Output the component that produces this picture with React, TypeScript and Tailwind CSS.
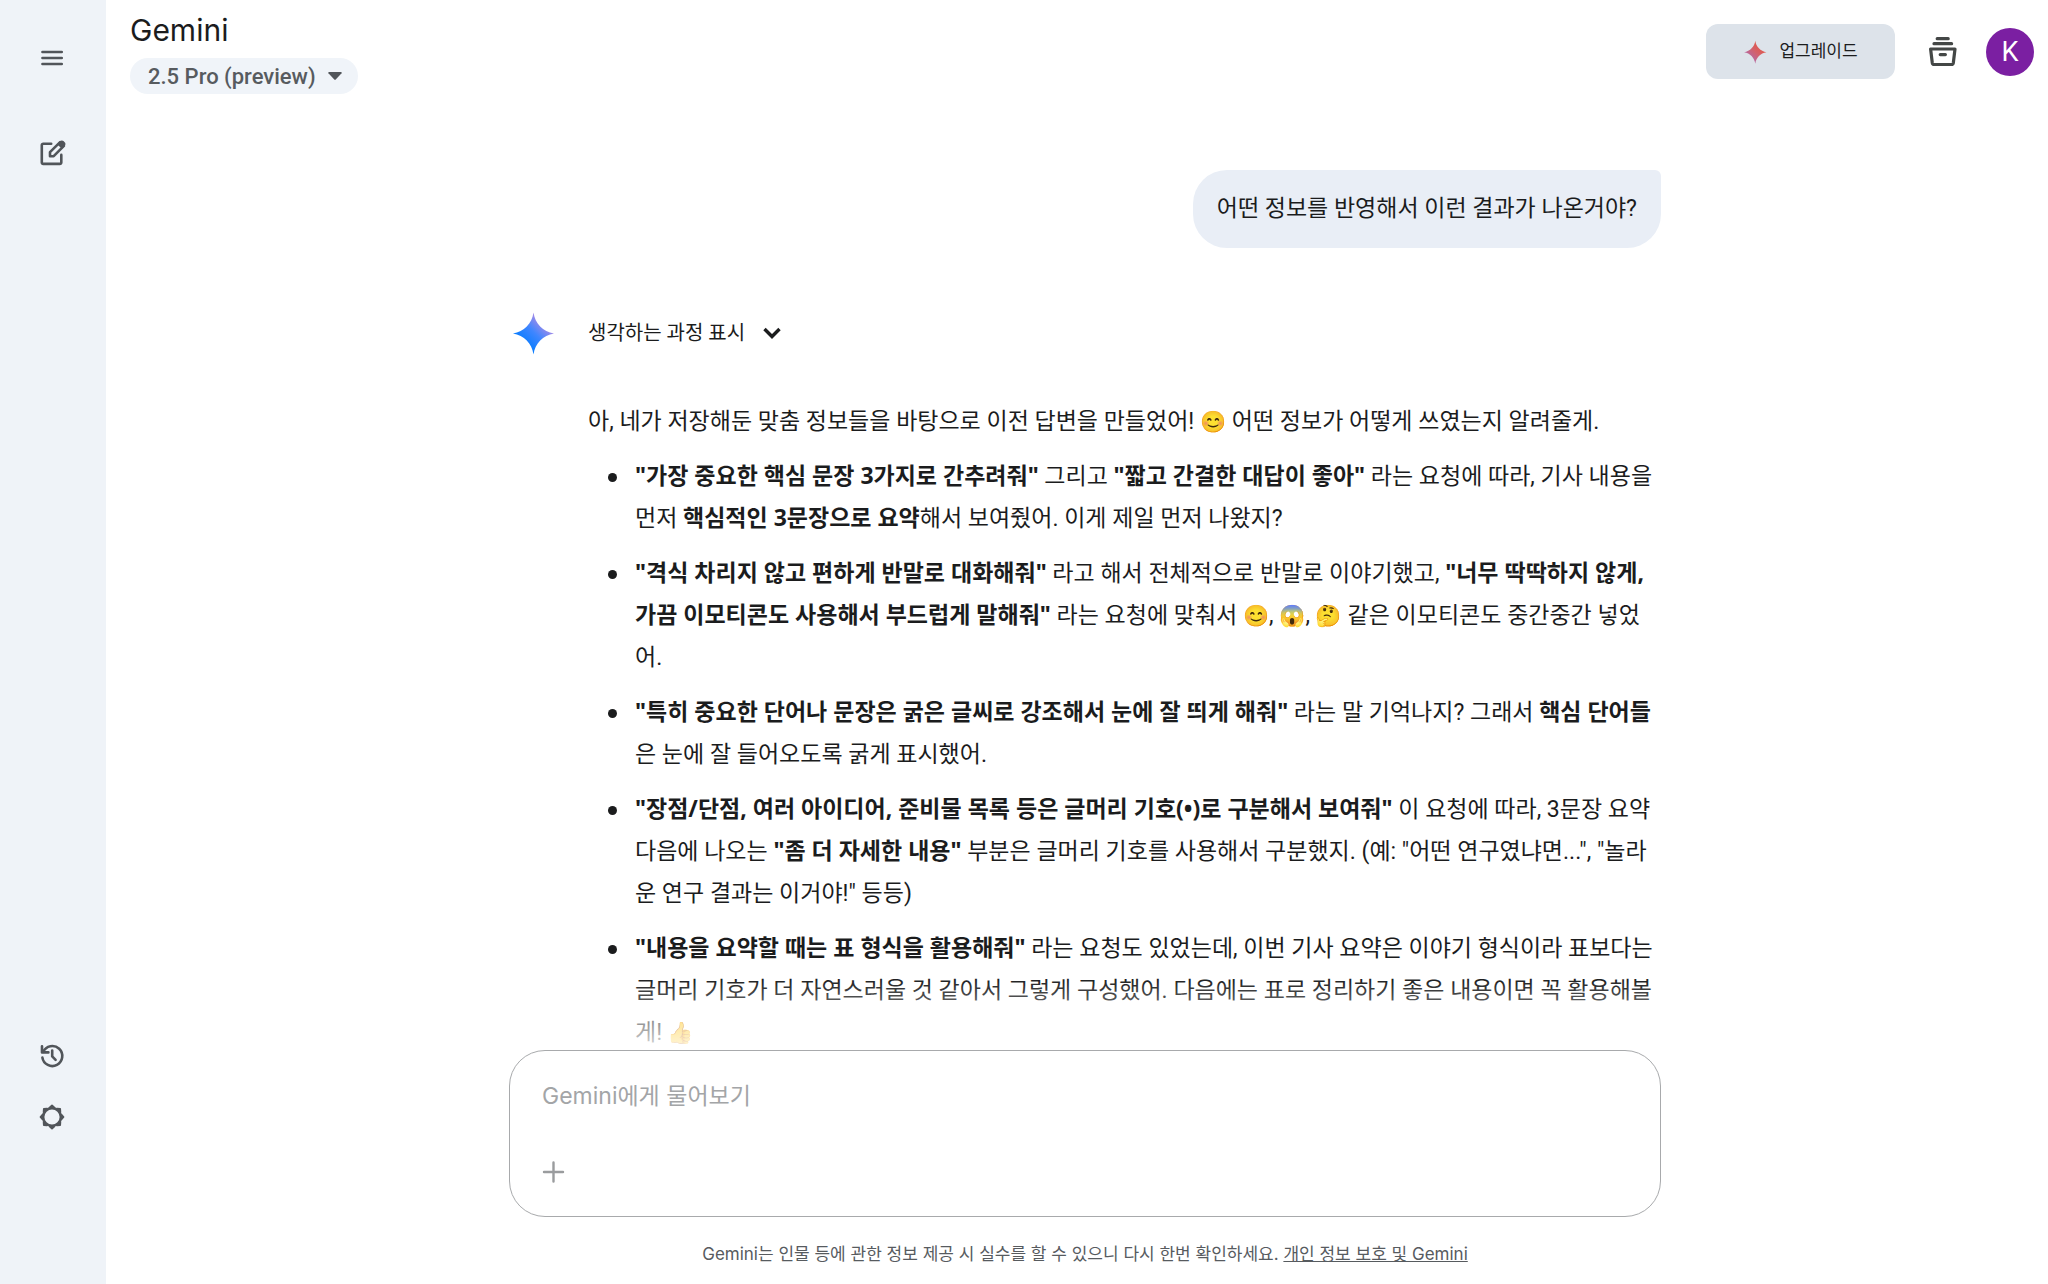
import { useState } from 'react';
import type { ReactNode } from 'react';

const fontStack = "font-['Roboto','Noto_Sans_CJK_KR','Noto_Color_Emoji',sans-serif]";

function MenuIcon() {
  return (
    <svg viewBox="0 0 28 28" className="size-7" fill="none" stroke="currentColor" strokeWidth="2.7" strokeLinecap="round">
      <path d="M4.5 8h19.2M4.5 14h19.2M4.5 20h19.2" />
    </svg>
  );
}

function EditIcon() {
  return (
    <svg viewBox="0 0 28 28" className="size-7" fill="none" stroke="currentColor" strokeWidth="2.6" strokeLinecap="round" strokeLinejoin="round">
      <path d="M13.2 4.8H5.2a1.4 1.4 0 0 0-1.4 1.4v17.3a1.4 1.4 0 0 0 1.4 1.4h16.7a1.4 1.4 0 0 0 1.4-1.4v-7.6" />
      <path d="M12 17.2v-4L22.1 3.1l3.8 3.8L15.7 17.2z" />
      <path d="M20.2 5.1l2.3-2.3a1.9 1.9 0 0 1 2.7 0l.9.9a1.9 1.9 0 0 1 0 2.7l-2.2 2.3z" fill="currentColor" strokeWidth="1.6" />
    </svg>
  );
}

function HistoryIcon() {
  return (
    <svg viewBox="0 0 28 28" className="size-7" fill="none" stroke="currentColor" strokeWidth="2.6" strokeLinecap="round" strokeLinejoin="round">
      <path d="M4.4 15.6A10 10 0 1 0 5.2 9.8" />
      <path d="M4 4.2v6.2h6.4" />
      <path d="M14.2 8.6v5.8l3.4 3.4" />
    </svg>
  );
}

function SettingsIcon() {
  return (
    <svg viewBox="-14 -14 28 28" className="size-7" fill="none" stroke="currentColor" strokeWidth="2.6" strokeLinejoin="round">
      <circle r="8.9" />
      {[0, 45, 90, 135, 180, 225, 270, 315].map((angle) => (
        <path key={angle} d="M-2.2 -9.6L0 -11.5L2.2 -9.6z" fill="currentColor" strokeWidth="1.8" transform={`rotate(${angle})`} />
      ))}
    </svg>
  );
}

function ActivityIcon() {
  return (
    <svg viewBox="0 0 32 32" className="size-8" fill="none" stroke="currentColor" strokeWidth="3.2" strokeLinecap="round" strokeLinejoin="round">
      <path d="M10.2 2.7h11M7 7.7h17.6M13.2 18.6h5.2" />
      <path d="M3.6 13h24.4l-1.7 14a1.8 1.8 0 0 1-1.8 1.5H7.1A1.8 1.8 0 0 1 5.3 27z" />
    </svg>
  );
}

type SparkProps = { id: string; className: string; stops: [string, string, string] };

function Spark({ id, className, stops }: SparkProps) {
  return (
    <svg viewBox="0 0 44 44" className={className} aria-hidden="true">
      <defs>
        <linearGradient id={id} x1="0.25" y1="0.7" x2="0.72" y2="0.2">
          <stop offset="0" stopColor={stops[0]} />
          <stop offset="0.5" stopColor={stops[1]} />
          <stop offset="1" stopColor={stops[2]} />
        </linearGradient>
      </defs>
      <path fill={`url(#${id})`} d="M22.5 1.5C24 12.5 32 20.7 43 22.5C32 24.3 24 32.5 22.5 43.5C21 32.5 13 24.3 2 22.5C13 20.7 21 12.5 22.5 1.5z" />
    </svg>
  );
}

function Emoji({ children }: { children: ReactNode }) {
  return <span className="text-[21px] leading-none">{children}</span>;
}

function B({ children }: { children: ReactNode }) {
  return <strong className="font-['Noto_Sans','Noto_Sans_CJK_KR',sans-serif] leading-none font-bold">{children}</strong>;
}

function Sidebar() {
  const button = 'flex size-12 items-center justify-center rounded-full hover:bg-black/5';
  return (
    <nav className="flex w-[106px] shrink-0 flex-col items-center justify-between bg-[#eff3f8] pt-[34px] pr-[3px] pb-[143px] text-[#51555a]">
      <div className="flex flex-col gap-[47px]">
        <button aria-label="메뉴" className={button}><MenuIcon /></button>
        <button aria-label="새 채팅" className={button}><EditIcon /></button>
      </div>
      <div className="flex flex-col gap-[13px]">
        <button aria-label="활동" className={button}><HistoryIcon /></button>
        <button aria-label="설정" className={button}><SettingsIcon /></button>
      </div>
    </nav>
  );
}

function Header() {
  return (
    <header className="flex items-start justify-between pr-[14px] pl-6">
      <div className="flex flex-col items-start pt-3">
        <h1 className="font-['Inter',sans-serif] text-[30px] leading-9 text-[#1b1c1d]">Gemini</h1>
        <div className="relative mt-[10px]">
          <select
            aria-label="모델"
            className="block h-9 appearance-none rounded-full bg-[#f0f4f9] pr-[42px] pl-[18px] text-[22px] font-medium text-[#575b5f] outline-none"
          >
            <option>2.5 Pro (preview)</option>
          </select>
          <svg viewBox="0 0 14 8" className="pointer-events-none absolute top-[14px] right-4 h-2 w-[14px]" fill="#51555a">
            <path d="M1 0h12a.8.8 0 0 1 .6 1.3L7.7 7.6a1 1 0 0 1-1.4 0L.4 1.3A.8.8 0 0 1 1 0z" />
          </svg>
        </div>
      </div>
      <div className="flex items-center pt-6">
        <button className="flex h-[55px] w-[189px] items-center justify-center gap-3 rounded-xl bg-[#dde3ea] text-[17px] text-[#1b1c1d]">
          <Spark id="spark-upgrade" className="size-6" stops={['#b8699c', '#d4606a', '#e0584a']} />
          업그레이드
        </button>
        <button aria-label="최근 활동" className="ml-8 flex size-8 items-center justify-center text-[#444746]">
          <ActivityIcon />
        </button>
        <button aria-label="계정" className="ml-[27px] size-12 rounded-full bg-[#7b1fa2] text-[27px] leading-[48px] text-white">
          K
        </button>
      </div>
    </header>
  );
}

const points: ReactNode[] = [
  <>
    <B>"가장 중요한 핵심 문장 3가지로 간추려줘"</B> 그리고 <B>"짧고 간결한 대답이 좋아"</B> 라는 요청에 따라, 기사 내용을 먼저{' '}
    <B>핵심적인 3문장으로 요약</B>해서 보여줬어. 이게 제일 먼저 나왔지?
  </>,
  <>
    <B>"격식 차리지 않고 편하게 반말로 대화해줘"</B> 라고 해서 전체적으로 반말로 이야기했고,{' '}
    <B>"너무 딱딱하지 않게, 가끔 이모티콘도 사용해서 부드럽게 말해줘"</B> 라는 요청에 맞춰서 <Emoji>😊</Emoji>, <Emoji>😱</Emoji>,{' '}
    <Emoji>🤔</Emoji> 같은 이모티콘도 중간중간 넣었어.
  </>,
  <>
    <B>"특히 중요한 단어나 문장은 굵은 글씨로 강조해서 눈에 잘 띄게 해줘"</B> 라는 말 기억나지? 그래서 <B>핵심 단어들</B>은 눈에 잘
    들어오도록 굵게 표시했어.
  </>,
  <>
    <B>"장점/단점, 여러 아이디어, 준비물 목록 등은 글머리 기호(•)로 구분해서 보여줘"</B> 이 요청에 따라, 3문장 요약 다음에 나오는{' '}
    <B>"좀 더 자세한 내용"</B> 부분은 글머리 기호를 사용해서 구분했지. (예: "어떤 연구였냐면...", "놀라운 연구 결과는 이거야!" 등등)
  </>,
  <>
    <B>"내용을 요약할 때는 표 형식을 활용해줘"</B> 라는 요청도 있었는데, 이번 기사 요약은 이야기 형식이라 표보다는 글머리 기호가 더
    자연스러울 것 같아서 그렇게 구성했어. 다음에는 표로 정리하기 좋은 내용이면 꼭 활용해볼게! <Emoji>👍</Emoji>
  </>,
];

function Conversation() {
  return (
    <section className="relative min-h-0 flex-1 overflow-hidden pl-4">
      <div className="mx-auto max-w-[1152px] pt-[76px] text-[23px] leading-[42px] text-[#1b1c1d]">
        <div className="flex justify-end">
          <p className="rounded-[34px] rounded-tr-md bg-[#e9eef6] px-6 py-[18px]">어떤 정보를 반영해서 이런 결과가 나온거야?</p>
        </div>
        <div className="mt-[63px] flex gap-[33px]">
          <Spark id="spark-answer" className="ml-[2px] size-11 shrink-0" stops={['#0b7dff', '#3f86ff', '#a98be6']} />
          <div className="min-w-0 flex-1">
            <button className="flex h-11 items-center gap-[18px] text-[20px]">
              생각하는 과정 표시
              <svg viewBox="0 0 18 12" className="h-3 w-[18px]" fill="none" stroke="currentColor" strokeWidth="3.4">
                <path d="M1.5 2l7.5 7.5L16.5 2" />
              </svg>
            </button>
            <p className="mt-[46px]">
              아, 네가 저장해둔 맞춤 정보들을 바탕으로 이전 답변을 만들었어! <Emoji>😊</Emoji> 어떤 정보가 어떻게 쓰였는지 알려줄게.
            </p>
            <ul className="mt-[13px] flex flex-col gap-[13px]">
              {points.map((point, i) => (
                <li key={i} className="flex">
                  <span className="mt-[17px] mr-[18px] ml-5 size-[9px] shrink-0 rounded-full bg-[#1b1c1d]" />
                  <p>{point}</p>
                </li>
              ))}
            </ul>
          </div>
        </div>
      </div>
      <div className="pointer-events-none absolute inset-x-0 bottom-0 h-[72px] bg-linear-to-b from-white/0 to-white/85" />
    </section>
  );
}

function Composer() {
  const [prompt, setPrompt] = useState('');
  return (
    <footer className="pl-4 font-['Inter','Noto_Sans_CJK_KR',sans-serif]">
      <form className="mx-auto flex max-w-[1152px] flex-col justify-between rounded-[36px] border border-[#a8aaac] px-8 pt-6 pb-8">
        <textarea
          rows={1}
          aria-label="프롬프트 입력"
          placeholder="Gemini에게 물어보기"
          value={prompt}
          onChange={(e) => setPrompt(e.target.value)}
          className="block h-[42px] resize-none overflow-hidden text-[23px] leading-[42px] outline-none placeholder:text-[#a3a5a7]"
        />
        <button type="button" aria-label="파일 추가" className="mt-[43px] size-6 text-[#9a9c9e]">
          <svg viewBox="0 0 24 24" fill="none" stroke="currentColor" strokeWidth="2.4" strokeLinecap="round">
            <path d="M2 12h19M11.5 2.5v19" />
          </svg>
        </button>
      </form>
      <p className="pt-6 pb-[17px] text-center text-[17px] leading-[26px] text-[#575b5f]">
        Gemini는 인물 등에 관한 정보 제공 시 실수를 할 수 있으니 다시 한번 확인하세요.{' '}
        <a href="#privacy" className="underline">
          개인 정보 보호 및 Gemini
        </a>
      </p>
    </footer>
  );
}

export default function App() {
  return (
    <div className={`flex h-screen bg-white ${fontStack}`}>
      <Sidebar />
      <main className="flex min-w-0 flex-1 flex-col">
        <Header />
        <Conversation />
        <Composer />
      </main>
    </div>
  );
}
